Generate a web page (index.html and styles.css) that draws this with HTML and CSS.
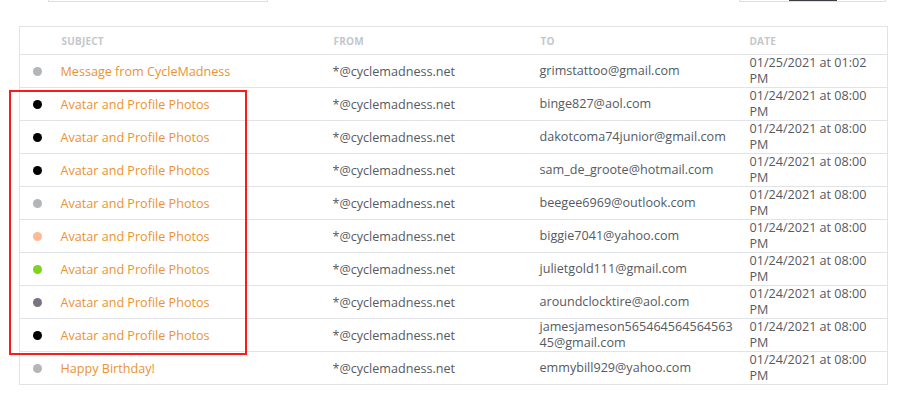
FILE: index.html
```html
<!DOCTYPE html>
<html lang="en">
<head>
<meta charset="utf-8">
<title>Messages</title>
<link rel="stylesheet" href="styles.css">
</head>
<body>
<div class="page">
  <div class="topbar">
    <div class="search"></div>
    <div class="tabs">
      <span class="tab"></span>
      <span class="tab active"></span>
      <span class="tab"></span>
    </div>
  </div>

  <table class="messages">
    <colgroup>
      <col class="c-dot"><col class="c-subject"><col class="c-from"><col class="c-to"><col class="c-date">
    </colgroup>
    <thead>
      <tr><th></th><th>Subject</th><th>From</th><th>To</th><th>Date</th></tr>
    </thead>
    <tbody>
      <tr><td><span class="dot gray"></span></td><td class="subject">Message from CycleMadness</td><td class="from">*@cyclemadness.net</td><td class="to">grimstattoo@gmail.com</td><td class="date">01/25/2021 at 01:02 PM</td></tr>
      <tr><td><span class="dot black"></span></td><td class="subject">Avatar and Profile Photos</td><td class="from">*@cyclemadness.net</td><td class="to">binge827@aol.com</td><td class="date">01/24/2021 at 08:00 PM</td></tr>
      <tr><td><span class="dot black"></span></td><td class="subject">Avatar and Profile Photos</td><td class="from">*@cyclemadness.net</td><td class="to">dakotcoma74junior@gmail.com</td><td class="date">01/24/2021 at 08:00 PM</td></tr>
      <tr><td><span class="dot black"></span></td><td class="subject">Avatar and Profile Photos</td><td class="from">*@cyclemadness.net</td><td class="to">sam_de_groote@hotmail.com</td><td class="date">01/24/2021 at 08:00 PM</td></tr>
      <tr><td><span class="dot gray"></span></td><td class="subject">Avatar and Profile Photos</td><td class="from">*@cyclemadness.net</td><td class="to">beegee6969@outlook.com</td><td class="date">01/24/2021 at 08:00 PM</td></tr>
      <tr><td><span class="dot peach"></span></td><td class="subject">Avatar and Profile Photos</td><td class="from">*@cyclemadness.net</td><td class="to">biggie7041@yahoo.com</td><td class="date">01/24/2021 at 08:00 PM</td></tr>
      <tr><td><span class="dot green"></span></td><td class="subject">Avatar and Profile Photos</td><td class="from">*@cyclemadness.net</td><td class="to">julietgold111@gmail.com</td><td class="date">01/24/2021 at 08:00 PM</td></tr>
      <tr><td><span class="dot mauve"></span></td><td class="subject">Avatar and Profile Photos</td><td class="from">*@cyclemadness.net</td><td class="to">aroundclocktire@aol.com</td><td class="date">01/24/2021 at 08:00 PM</td></tr>
      <tr><td><span class="dot black"></span></td><td class="subject">Avatar and Profile Photos</td><td class="from">*@cyclemadness.net</td><td class="to">jamesjameson56546456456456345@gmail.com</td><td class="date">01/24/2021 at 08:00 PM</td></tr>
      <tr><td><span class="dot gray"></span></td><td class="subject">Happy Birthday!</td><td class="from">*@cyclemadness.net</td><td class="to">emmybill929@yahoo.com</td><td class="date">01/24/2021 at 08:00 PM</td></tr>
    </tbody>
  </table>

  <div class="highlight"></div>
</div>
</body>
</html>
```

FILE: styles.css
```css
html, body {
  margin: 0;
  padding: 0;
  background: #ffffff;
}

.page {
  position: relative;
  width: 904px;
  height: 398px;
  overflow: hidden;
  font-family: "Open Sans", "Noto Sans", sans-serif;
  font-size: 12.6px;
  color: #555a5f;
}

.topbar {
  display: flex;
  justify-content: space-between;
  align-items: flex-start;
  padding: 0 18px 0 48px;
  height: 2px;
}

.search {
  width: 218px;
  height: 1px;
  border: 1px solid #dcdfe4;
  border-top: none;
}

.tabs {
  display: flex;
  width: 145px;
  height: 1px;
  border: 1px solid #dcdfe4;
  border-top: none;
}

.tab {
  flex: 1;
}

.tab.active {
  flex: 0 0 48px;
  background: #3a3d42;
}

.messages {
  margin: 24px 0 0 19px;
  width: 868px;
  border-collapse: collapse;
  table-layout: fixed;
  border: 1px solid #e1e3e6;
}

.c-dot { width: 41px; }
.c-subject { width: 272px; }
.c-from { width: 207px; }
.c-to { width: 210px; }
.c-date { width: 138px; }

.messages th {
  height: 26px;
  padding: 1px 0 0 1px;
  text-align: left;
  font-size: 10px;
  font-weight: 700;
  letter-spacing: 0.2px;
  text-transform: uppercase;
  color: #c3c7cb;
  border-bottom: 1px solid #e1e3e6;
  vertical-align: middle;
}

.messages th:last-child {
  padding-left: 0;
}

.messages td {
  height: 31px;
  padding: 1px 0 0 0;
  border-bottom: 1px solid #e1e3e6;
  vertical-align: middle;
  line-height: 16px;
}

.messages td:first-child {
  padding-left: 13px;
}

.dot {
  display: block;
  width: 9px;
  height: 9px;
  border-radius: 50%;
}

.dot.gray { background: #b3b6b8; }
.dot.black { background: #000000; }
.dot.peach { background: #ffba93; }
.dot.green { background: #7ed321; }
.dot.mauve { background: #7b7382; }

.subject {
  color: #ec9231;
}

.messages td.to {
  height: 32px;
  padding: 0 14px 0 0;
  word-break: break-all;
}

.messages td.date {
  height: 32px;
  padding: 0 14px 0 0;
}

.highlight {
  position: absolute;
  left: 9px;
  top: 90px;
  width: 234px;
  height: 261px;
  border: 2px solid #ff1a1a;
}
```
